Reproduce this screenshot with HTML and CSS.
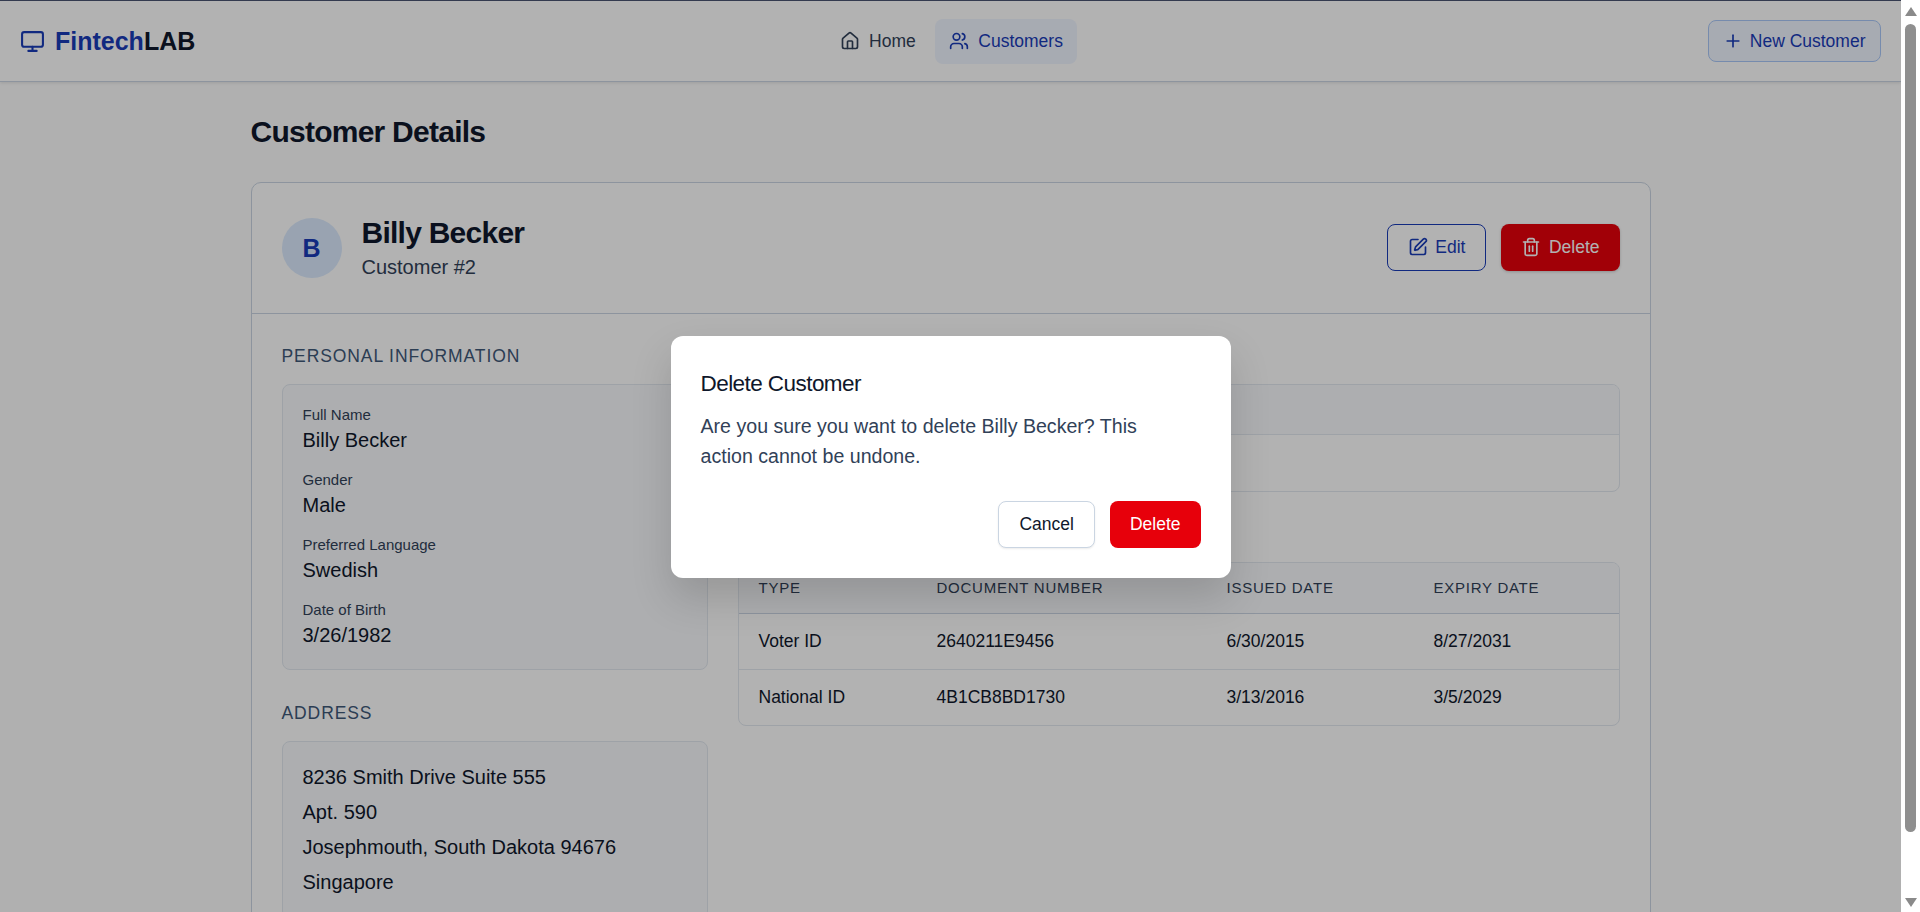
FILE: index.html
```html
<!DOCTYPE html>
<html lang="en">
<head>
    <meta charset="UTF-8">
    <meta name="viewport" content="width=device-width, initial-scale=1.0">
    <title>Customer Details - FintechLAB</title>
    <link rel="stylesheet" href="styles.css">
</head>
<body>

<div class="app">
    <header class="navbar">
        <a class="brand" href="#">
            <svg class="icon icon-brand" viewBox="0 0 24 24"><rect x="2" y="3" width="20" height="14" rx="2"/><line x1="8" y1="21" x2="16" y2="21"/><line x1="12" y1="17" x2="12" y2="21"/></svg>
            <span><span class="brand-blue">Fintech</span>LAB</span>
        </a>
        <nav class="nav-links">
            <a class="nav-link" href="#">
                <svg class="icon" viewBox="0 0 24 24"><path d="M15 21v-8a1 1 0 0 0-1-1h-4a1 1 0 0 0-1 1v8"/><path d="M3 10a2 2 0 0 1 .709-1.528l7-5.999a2 2 0 0 1 2.582 0l7 5.999A2 2 0 0 1 21 10v9a2 2 0 0 1-2 2H5a2 2 0 0 1-2-2z"/></svg>
                Home
            </a>
            <a class="nav-link active" href="#">
                <svg class="icon" viewBox="0 0 24 24"><path d="M16 21v-2a4 4 0 0 0-4-4H6a4 4 0 0 0-4 4v2"/><circle cx="9" cy="7" r="4"/><path d="M22 21v-2a4 4 0 0 0-3-3.87"/><path d="M16 3.13a4 4 0 0 1 0 7.75"/></svg>
                Customers
            </a>
        </nav>
        <a class="new-customer" href="#">
            <svg class="icon" viewBox="0 0 24 24"><path d="M5 12h14"/><path d="M12 5v14"/></svg>
            New Customer
        </a>
    </header>

    <main class="container">
        <h1 class="page-title">Customer Details</h1>

        <section class="card">
            <div class="card-header">
                <div class="avatar">B</div>
                <div class="customer-name">
                    <h2>Billy Becker</h2>
                    <p>Customer #2</p>
                </div>
                <div class="card-actions">
                    <button type="button" class="btn btn-outline">
                        <svg class="icon" viewBox="0 0 24 24"><path d="M12 3H5a2 2 0 0 0-2 2v14a2 2 0 0 0 2 2h14a2 2 0 0 0 2-2v-7"/><path d="M18.375 2.625a1 1 0 0 1 3 3l-9.013 9.014a2 2 0 0 1-.853.505l-2.873.84a.5.5 0 0 1-.62-.62l.84-2.873a2 2 0 0 1 .506-.852z"/></svg>
                        Edit
                    </button>
                    <button type="button" class="btn btn-danger btn-raised">
                        <svg class="icon" viewBox="0 0 24 24"><path d="M3 6h18"/><path d="M19 6v14c0 1-1 2-2 2H7c-1 0-2-1-2-2V6"/><path d="M8 6V4c0-1 1-2 2-2h4c1 0 2 1 2 2v2"/><line x1="10" y1="11" x2="10" y2="17"/><line x1="14" y1="11" x2="14" y2="17"/></svg>
                        Delete
                    </button>
                </div>
            </div>

            <div class="card-body">
                <div class="col-left">
                    <h3 class="section-title">Personal Information</h3>
                    <div class="info-box">
                        <div class="field"><span class="field-label">Full Name</span><span class="field-value">Billy Becker</span></div>
                        <div class="field"><span class="field-label">Gender</span><span class="field-value">Male</span></div>
                        <div class="field"><span class="field-label">Preferred Language</span><span class="field-value">Swedish</span></div>
                        <div class="field"><span class="field-label">Date of Birth</span><span class="field-value">3/26/1982</span></div>
                    </div>

                    <h3 class="section-title address-title">Address</h3>
                    <div class="info-box address">
                        <p>8236 Smith Drive Suite 555</p>
                        <p>Apt. 590</p>
                        <p>Josephmouth, South Dakota 94676</p>
                        <p>Singapore</p>
                    </div>
                </div>

                <div class="col-right">
                    <div class="table-box top-box">
                        <div class="top-box-head"></div>
                        <div class="top-box-row"></div>
                    </div>

                    <div class="table-box docs-box">
                        <table class="docs">
                            <colgroup>
                                <col class="col-type">
                                <col class="col-number">
                                <col class="col-issued">
                                <col class="col-expiry">
                            </colgroup>
                            <thead>
                                <tr>
                                    <th>Type</th>
                                    <th>Document Number</th>
                                    <th>Issued Date</th>
                                    <th>Expiry Date</th>
                                </tr>
                            </thead>
                            <tbody>
                                <tr>
                                    <td>Voter ID</td>
                                    <td>2640211E9456</td>
                                    <td>6/30/2015</td>
                                    <td>8/27/2031</td>
                                </tr>
                                <tr>
                                    <td>National ID</td>
                                    <td>4B1CB8BD1730</td>
                                    <td>3/13/2016</td>
                                    <td>3/5/2029</td>
                                </tr>
                            </tbody>
                        </table>
                    </div>
                </div>
            </div>
        </section>
    </main>

    <!-- Delete dialog -->
    <div class="overlay">
        <div class="modal">
            <h3 class="modal-title">Delete Customer</h3>
            <p class="modal-text">Are you sure you want to delete Billy Becker? This action cannot be undone.</p>
            <div class="modal-actions">
                <button type="button" class="btn btn-cancel">Cancel</button>
                <button type="button" class="btn btn-danger">Delete</button>
            </div>
        </div>
    </div>
</div>

<div class="scrollbar">
    <span class="arrow-up"></span>
    <span class="thumb"></span>
    <span class="arrow-down"></span>
</div>

</body>
</html>
```

FILE: styles.css
```css
* {
    box-sizing: border-box;
}
html, body {
    height: 100%;
}
body {
    margin: 0;
    display: flex;
    overflow: hidden;
    font-family: "Liberation Sans", Arial, sans-serif;
    font-size: 17.5px;
    color: #0f172b;
    background-color: #fcfcfc;
}
h1, h2, h3, p {
    margin: 0;
}
a {
    text-decoration: none;
    color: inherit;
}
.app {
    position: relative;
    flex: 1;
    min-width: 0;
    overflow: hidden;
}
.icon {
    width: 20px;
    height: 20px;
    flex: none;
    fill: none;
    stroke: currentColor;
    stroke-width: 2;
    stroke-linecap: round;
    stroke-linejoin: round;
}

/* navbar */
.navbar {
    display: grid;
    grid-template-columns: 1fr auto 1fr;
    align-items: center;
    height: 82px;
    padding: 0 20px;
    background-color: #fff;
    border-top: 1px solid #4a5372;
    border-bottom: 1px solid #cad5e2;
    box-shadow: 0 1px 3px rgba(0, 0, 0, 0.1);
}
.brand {
    display: flex;
    align-items: center;
    gap: 10px;
    font-size: 25px;
    font-weight: bold;
    line-height: 30px;
}
.brand-blue, .icon-brand {
    color: #193cb8;
}
.icon-brand {
    width: 25px;
    height: 25px;
}
.nav-links {
    display: flex;
    gap: 5px;
    margin-left: 2px;
}
.nav-link {
    display: flex;
    align-items: center;
    gap: 9px;
    height: 45px;
    padding: 0 14.25px;
    border-radius: 8px;
    color: #314158;
}
.nav-link.active {
    background-color: #f0f5ff;
    color: #193cb8;
}
.new-customer {
    justify-self: end;
    display: flex;
    align-items: center;
    gap: 6.5px;
    height: 42px;
    padding: 0 14.5px;
    background-color: #f0f5ff;
    border: 1px solid #a9c8f8;
    border-radius: 8px;
    color: #193cb8;
}

/* page */
.container {
    width: 1400px;
    margin: 0 auto;
    padding-top: 31px;
}
.page-title {
    font-size: 30px;
    font-weight: bold;
    line-height: 38px;
    letter-spacing: -0.75px;
    margin-bottom: 31px;
}
.card {
    background-color: #fff;
    border: 1px solid #cad5e2;
    border-radius: 10px;
}
.card-header {
    display: flex;
    align-items: center;
    gap: 20px;
    padding: 31.5px 30px;
    border-bottom: 1px solid #cad5e2;
}
.avatar {
    display: flex;
    align-items: center;
    justify-content: center;
    width: 60px;
    height: 60px;
    border-radius: 50%;
    background-color: #dbeafe;
    color: #193cb8;
    font-size: 25px;
    font-weight: bold;
}
.customer-name h2 {
    font-size: 30px;
    line-height: 35px;
    letter-spacing: -0.75px;
}
.customer-name p {
    margin-top: 2px;
    font-size: 20px;
    line-height: 30px;
    color: #314158;
}
.card-actions {
    display: flex;
    gap: 15px;
    margin-left: auto;
    margin-bottom: 2px;
}
.btn {
    display: flex;
    align-items: center;
    gap: 7.5px;
    height: 47px;
    padding: 0 20px;
    border: 1px solid transparent;
    border-radius: 8px;
    font-family: inherit;
    font-size: 17.5px;
    cursor: pointer;
}
.btn-outline {
    background-color: #fff;
    border-color: #193cb8;
    color: #193cb8;
}
.btn-danger {
    padding: 0 19px;
    background-color: #e7000b;
    color: #fff;
}
.btn-raised {
    box-shadow: 0 1px 3px rgba(0, 0, 0, 0.2);
}
.btn-cancel {
    background-color: #fff;
    border-color: #cad5e2;
    color: #0f172b;
    box-shadow: 0 1px 2px rgba(0, 0, 0, 0.08);
}
.card-body {
    display: grid;
    grid-template-columns: 426px 1fr;
    gap: 30px;
    padding: 29px 30px 30px;
}

/* left column */
.section-title {
    font-size: 17.5px;
    font-weight: normal;
    line-height: 26px;
    letter-spacing: 0.9px;
    text-transform: uppercase;
    color: #3e5878;
    margin-bottom: 15px;
}
.address-title {
    margin-top: 30px;
}
.info-box {
    padding: 17.5px 20px;
    background-color: #f8fafc;
    border: 1px solid #e2e8f0;
    border-radius: 8px;
}
.field {
    margin-bottom: 14.5px;
}
.field:last-child {
    margin-bottom: 3px;
}
.field-label {
    display: block;
    font-size: 15px;
    line-height: 24.5px;
    color: #314158;
}
.field-value {
    display: block;
    font-size: 20px;
    line-height: 26px;
}
.address p {
    font-size: 20px;
    line-height: 35px;
}
.address p:first-child {
    margin-top: 1px;
}

/* right column */
.table-box {
    border: 1px solid #e2e8f0;
    border-radius: 8px;
    overflow: hidden;
}
.top-box {
    margin-top: 41px;
}
.top-box-head {
    height: 50px;
    background-color: #f8fafc;
    border-bottom: 1px solid #e2e8f0;
}
.top-box-row {
    height: 56px;
}
.docs-box {
    margin-top: 70px;
}
.docs {
    width: 100%;
    border-collapse: collapse;
    table-layout: fixed;
}
.col-type {
    width: 178px;
}
.col-number {
    width: 290px;
}
.col-issued {
    width: 207px;
}
.docs th {
    height: 50px;
    padding: 0 20px;
    background-color: #f8fafc;
    border-bottom: 1px solid #cad5e2;
    font-size: 15px;
    font-weight: normal;
    letter-spacing: 0.75px;
    text-align: left;
    text-transform: uppercase;
    color: #314158;
}
.docs td {
    height: 56px;
    padding: 0 20px;
    border-bottom: 1px solid #e2e8f0;
}
.docs tr:last-child td {
    border-bottom: none;
}

/* modal */
.overlay {
    position: absolute;
    inset: 0;
    display: flex;
    align-items: center;
    justify-content: center;
    padding-top: 2px;
    background-color: rgba(0, 0, 0, 0.3);
}
.modal {
    width: 560px;
    padding: 30px;
    background-color: #fff;
    border-radius: 12px;
    box-shadow: 0 20px 40px rgba(0, 0, 0, 0.15);
}
.modal-title {
    font-size: 22.5px;
    font-weight: normal;
    line-height: 36px;
    letter-spacing: -0.56px;
    margin-bottom: 9px;
}
.modal-text {
    max-width: 470px;
    font-size: 19.6px;
    line-height: 30px;
    color: #314158;
    margin-bottom: 30px;
}
.modal-actions {
    display: flex;
    justify-content: flex-end;
    gap: 15px;
}

/* scrollbar */
.scrollbar {
    display: flex;
    flex-direction: column;
    align-items: center;
    flex: none;
    width: 19px;
    padding: 7px 0 5px;
    background-color: #fff;
}
.arrow-up, .arrow-down {
    width: 0;
    height: 0;
    border-left: 6px solid transparent;
    border-right: 6px solid transparent;
}
.arrow-up {
    border-bottom: 9px solid #8a8a8a;
}
.arrow-down {
    margin-top: auto;
    border-top: 9px solid #8a8a8a;
}
.thumb {
    width: 11px;
    height: 808px;
    margin-top: 8px;
    background-color: #8f8f8f;
    border-radius: 6px;
}
```
